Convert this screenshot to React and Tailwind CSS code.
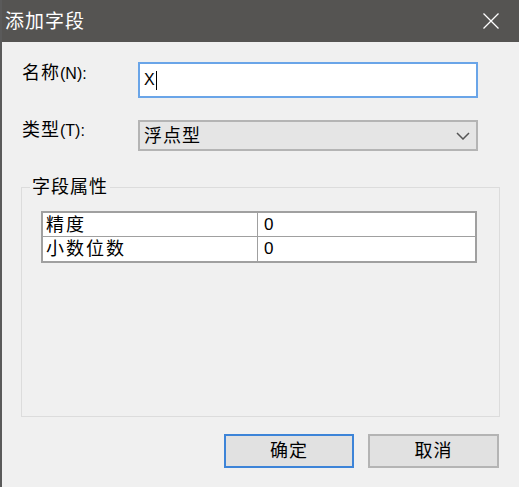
import React from 'react';

const font = { fontFamily: '"Liberation Sans", "Noto Sans CJK SC", sans-serif' };

function Label({ cjk, latin }) {
    return (
        <div className="w-[136px] pl-[20px] text-[18px] leading-[20px] text-black">
            <span className="tracking-[1px]">{cjk}</span>
            <span className="text-[16px]">{latin}</span>
        </div>
    );
}

export default function App() {
    return (
        <div className="w-[519px] h-[487px] bg-[#f0f0f0] border-l-2 border-[#5a5a5a] flex flex-col" style={font}>
            <div className="h-[42px] bg-[#555452] flex items-center justify-between pl-[3px] pr-[20px]">
                <span className="text-white text-[19px] leading-none tracking-[1px]">添加字段</span>
                <svg width="16" height="16" viewBox="0 0 16 16" fill="none" stroke="#ffffff" strokeWidth="1.3">
                    <path d="M0.5 0.5 L15.5 15.5 M15.5 0.5 L0.5 15.5" />
                </svg>
            </div>

            <div className="flex items-start mt-[20px]">
                <div className="pt-[1px]">
                    <Label cjk="名称" latin="(N):" />
                </div>
                <div className="w-[340px] h-[36px] border-2 border-[#6aa5e8] bg-white flex items-center pl-[4px]">
                    <span className="text-[16px] leading-none text-black">X</span>
                    <span className="w-[1px] h-[19px] bg-black ml-[1px]"></span>
                </div>
            </div>

            <div className="flex items-start mt-[22px]">
                <div>
                    <Label cjk="类型" latin="(T):" />
                </div>
                <div className="w-[340px] h-[31px] border-2 border-[#b4b4b4] bg-[#e5e5e5] flex items-center justify-between pl-[4px] pr-[6px]">
                    <span className="text-[18px] leading-none tracking-[1px] text-black">浮点型</span>
                    <svg width="14" height="8" viewBox="0 0 14 8" fill="none" stroke="#555555" strokeWidth="1.5">
                        <path d="M1 1 L7 7 L13 1" />
                    </svg>
                </div>
            </div>

            <fieldset className="ml-[19px] mt-[25px] w-[479px] h-[241px] border border-[#dcdcdc]">
                <legend className="ml-[8px] px-[2px] text-[18px] leading-[22px] tracking-[1px] text-black">字段属性</legend>
                <div className="ml-[19px] mt-[13px] w-[436px] border-2 border-[#a0a0a0] bg-white text-black">
                    <div className="flex h-[24px] border-b border-[#a0a0a0]">
                        <div className="w-[215px] border-r border-[#a0a0a0] pl-[3px] text-[18px] leading-[24px] tracking-[2px]">精度</div>
                        <div className="flex-1 pl-[6px] text-[17px] leading-[24px]">0</div>
                    </div>
                    <div className="flex h-[24px]">
                        <div className="w-[215px] border-r border-[#a0a0a0] pl-[3px] text-[18px] leading-[24px] tracking-[2px]">小数位数</div>
                        <div className="flex-1 pl-[6px] text-[17px] leading-[24px]">0</div>
                    </div>
                </div>
            </fieldset>

            <div className="flex justify-end gap-[14px] pr-[20px] mt-[17px]">
                <button className="w-[130px] h-[34px] border-2 border-[#3d84d8] bg-[#e1e1e1] text-[18px] tracking-[1px] text-black">确定</button>
                <button className="w-[131px] h-[34px] border-2 border-[#b4b4b4] bg-[#e1e1e1] text-[18px] tracking-[1px] text-black">取消</button>
            </div>
        </div>
    );
}
